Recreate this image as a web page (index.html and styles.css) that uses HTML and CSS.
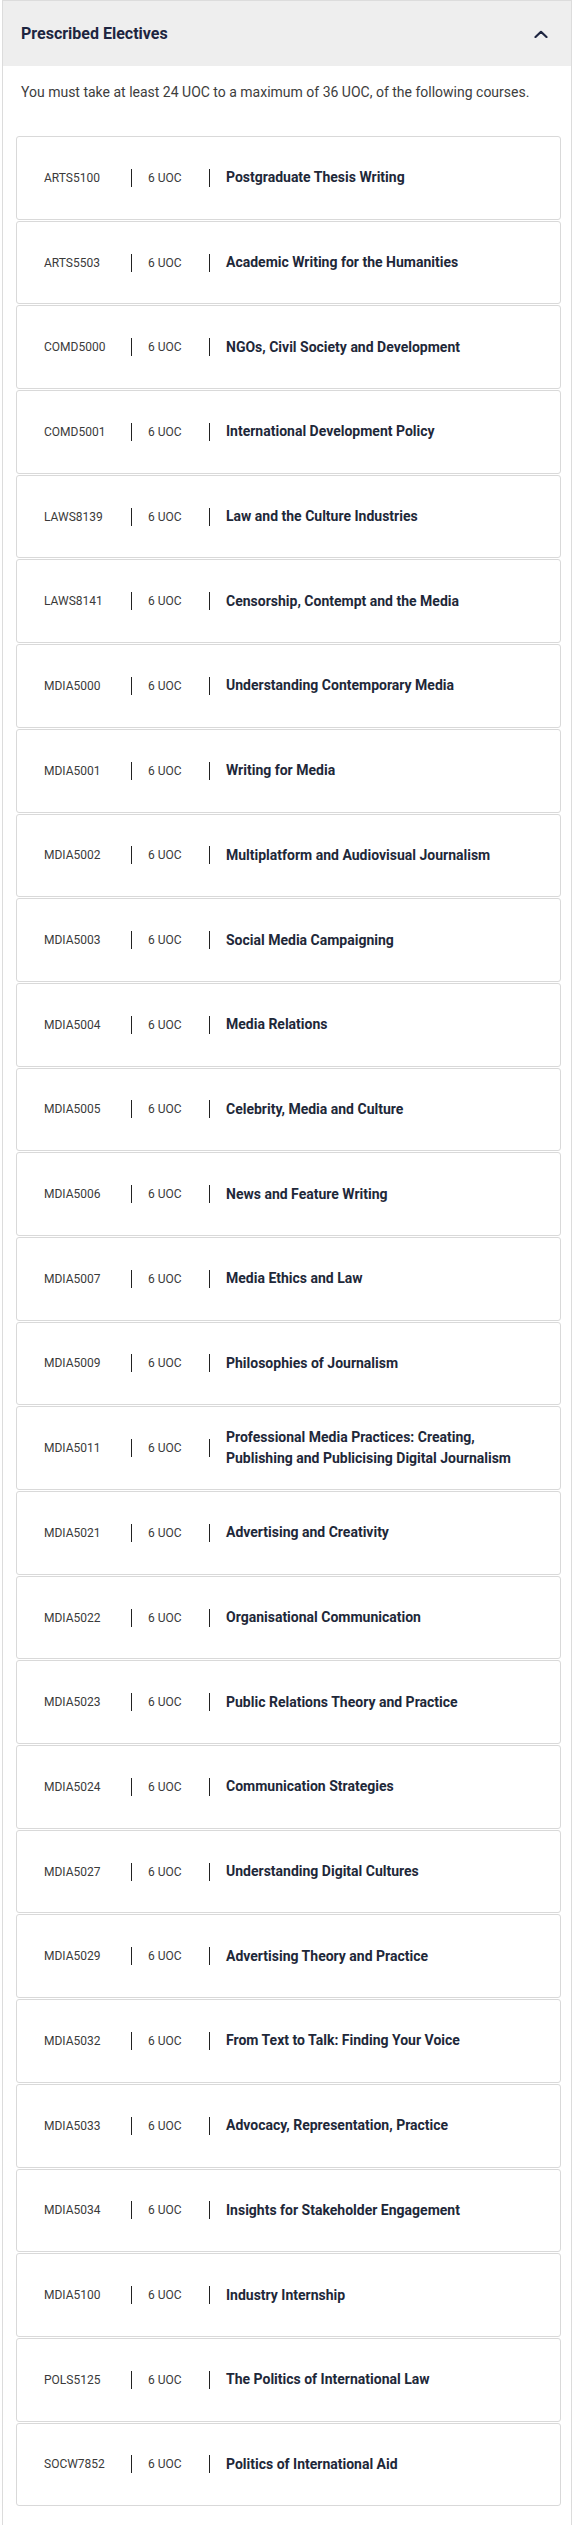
FILE: index.html
```html
<!DOCTYPE html>
<html lang="en">
<head>
<meta charset="utf-8">
<title>Prescribed Electives</title>
<link rel="stylesheet" href="styles.css">
</head>
<body>
<section class="panel">
  <header class="panel-head">
    <h2 class="panel-title">Prescribed Electives</h2>
    <svg class="chevron" width="14" height="8" viewBox="0 0 14 8" aria-hidden="true"><path d="M1.5 7 L7 1.8 L12.5 7" fill="none" stroke="#1d2540" stroke-width="2.2" stroke-linecap="round" stroke-linejoin="round"/></svg>
  </header>
  <div class="panel-body">
    <p class="desc">You must take at least 24 UOC to a maximum of 36 UOC, of the following courses.</p>
    <ul class="courses">
      <li class="course"><span class="code">ARTS5100</span><span class="sep"></span><span class="uoc">6 UOC</span><span class="sep"></span><span class="name">Postgraduate Thesis Writing</span></li>
      <li class="course"><span class="code">ARTS5503</span><span class="sep"></span><span class="uoc">6 UOC</span><span class="sep"></span><span class="name">Academic Writing for the Humanities</span></li>
      <li class="course"><span class="code">COMD5000</span><span class="sep"></span><span class="uoc">6 UOC</span><span class="sep"></span><span class="name">NGOs, Civil Society and Development</span></li>
      <li class="course"><span class="code">COMD5001</span><span class="sep"></span><span class="uoc">6 UOC</span><span class="sep"></span><span class="name">International Development Policy</span></li>
      <li class="course"><span class="code">LAWS8139</span><span class="sep"></span><span class="uoc">6 UOC</span><span class="sep"></span><span class="name">Law and the Culture Industries</span></li>
      <li class="course"><span class="code">LAWS8141</span><span class="sep"></span><span class="uoc">6 UOC</span><span class="sep"></span><span class="name">Censorship, Contempt and the Media</span></li>
      <li class="course"><span class="code">MDIA5000</span><span class="sep"></span><span class="uoc">6 UOC</span><span class="sep"></span><span class="name">Understanding Contemporary Media</span></li>
      <li class="course"><span class="code">MDIA5001</span><span class="sep"></span><span class="uoc">6 UOC</span><span class="sep"></span><span class="name">Writing for Media</span></li>
      <li class="course"><span class="code">MDIA5002</span><span class="sep"></span><span class="uoc">6 UOC</span><span class="sep"></span><span class="name">Multiplatform and Audiovisual Journalism</span></li>
      <li class="course"><span class="code">MDIA5003</span><span class="sep"></span><span class="uoc">6 UOC</span><span class="sep"></span><span class="name">Social Media Campaigning</span></li>
      <li class="course"><span class="code">MDIA5004</span><span class="sep"></span><span class="uoc">6 UOC</span><span class="sep"></span><span class="name">Media Relations</span></li>
      <li class="course"><span class="code">MDIA5005</span><span class="sep"></span><span class="uoc">6 UOC</span><span class="sep"></span><span class="name">Celebrity, Media and Culture</span></li>
      <li class="course"><span class="code">MDIA5006</span><span class="sep"></span><span class="uoc">6 UOC</span><span class="sep"></span><span class="name">News and Feature Writing</span></li>
      <li class="course"><span class="code">MDIA5007</span><span class="sep"></span><span class="uoc">6 UOC</span><span class="sep"></span><span class="name">Media Ethics and Law</span></li>
      <li class="course"><span class="code">MDIA5009</span><span class="sep"></span><span class="uoc">6 UOC</span><span class="sep"></span><span class="name">Philosophies of Journalism</span></li>
      <li class="course"><span class="code">MDIA5011</span><span class="sep"></span><span class="uoc">6 UOC</span><span class="sep"></span><span class="name">Professional Media Practices: Creating, Publishing and Publicising Digital Journalism</span></li>
      <li class="course"><span class="code">MDIA5021</span><span class="sep"></span><span class="uoc">6 UOC</span><span class="sep"></span><span class="name">Advertising and Creativity</span></li>
      <li class="course"><span class="code">MDIA5022</span><span class="sep"></span><span class="uoc">6 UOC</span><span class="sep"></span><span class="name">Organisational Communication</span></li>
      <li class="course"><span class="code">MDIA5023</span><span class="sep"></span><span class="uoc">6 UOC</span><span class="sep"></span><span class="name">Public Relations Theory and Practice</span></li>
      <li class="course"><span class="code">MDIA5024</span><span class="sep"></span><span class="uoc">6 UOC</span><span class="sep"></span><span class="name">Communication Strategies</span></li>
      <li class="course"><span class="code">MDIA5027</span><span class="sep"></span><span class="uoc">6 UOC</span><span class="sep"></span><span class="name">Understanding Digital Cultures</span></li>
      <li class="course"><span class="code">MDIA5029</span><span class="sep"></span><span class="uoc">6 UOC</span><span class="sep"></span><span class="name">Advertising Theory and Practice</span></li>
      <li class="course"><span class="code">MDIA5032</span><span class="sep"></span><span class="uoc">6 UOC</span><span class="sep"></span><span class="name">From Text to Talk: Finding Your Voice</span></li>
      <li class="course"><span class="code">MDIA5033</span><span class="sep"></span><span class="uoc">6 UOC</span><span class="sep"></span><span class="name">Advocacy, Representation, Practice</span></li>
      <li class="course"><span class="code">MDIA5034</span><span class="sep"></span><span class="uoc">6 UOC</span><span class="sep"></span><span class="name">Insights for Stakeholder Engagement</span></li>
      <li class="course"><span class="code">MDIA5100</span><span class="sep"></span><span class="uoc">6 UOC</span><span class="sep"></span><span class="name">Industry Internship</span></li>
      <li class="course"><span class="code">POLS5125</span><span class="sep"></span><span class="uoc">6 UOC</span><span class="sep"></span><span class="name">The Politics of International Law</span></li>
      <li class="course"><span class="code">SOCW7852</span><span class="sep"></span><span class="uoc">6 UOC</span><span class="sep"></span><span class="name">Politics of International Aid</span></li>
    </ul>
  </div>
</section>
</body>
</html>
```

FILE: styles.css
```css
html, body {
  margin: 0;
  padding: 0;
  background: #ffffff;
}

body {
  font-family: Roboto, "Liberation Sans", Arial, sans-serif;
  color: #333333;
}

.panel {
  margin-left: 2px;
  width: 570px;
  box-sizing: border-box;
  border: 1px solid #dcdcdc;
  border-bottom: none;
  min-height: 2540px;
}

.panel-head {
  height: 65px;
  background: #eeeeee;
  display: flex;
  align-items: center;
  justify-content: space-between;
  padding: 0 23px 0 18px;
}

.panel-title {
  margin: 0;
  font-size: 16px;
  font-weight: 700;
  color: #1d2540;
  line-height: 20px;
}

.chevron {
  display: block;
  margin-top: 1px;
}

.panel-body {
  padding: 16px 10px 20px 13px;
}

.desc {
  margin: 0 0 33px 5px;
  font-size: 14px;
  line-height: 21px;
  color: #3d3d3d;
}

.courses {
  list-style: none;
  margin: 0;
  padding: 0;
}

.course {
  box-sizing: border-box;
  height: 83.7px;
  margin-bottom: 1px;
  border: 1px solid #d9d9d9;
  border-radius: 3px;
  display: flex;
  align-items: center;
  padding: 0 27px 0 27px;
}

.code {
  width: 87px;
  flex: none;
  font-size: 12px;
  color: #3a3a3a;
}

.uoc {
  width: 61px;
  flex: none;
  font-size: 12px;
  color: #3a3a3a;
}

.sep {
  flex: none;
  width: 1px;
  height: 18px;
  background: #222222;
  margin-right: 16px;
}

.name {
  flex: 1;
  font-size: 14px;
  font-weight: 700;
  line-height: 21px;
  color: #1e2839;
}
```
